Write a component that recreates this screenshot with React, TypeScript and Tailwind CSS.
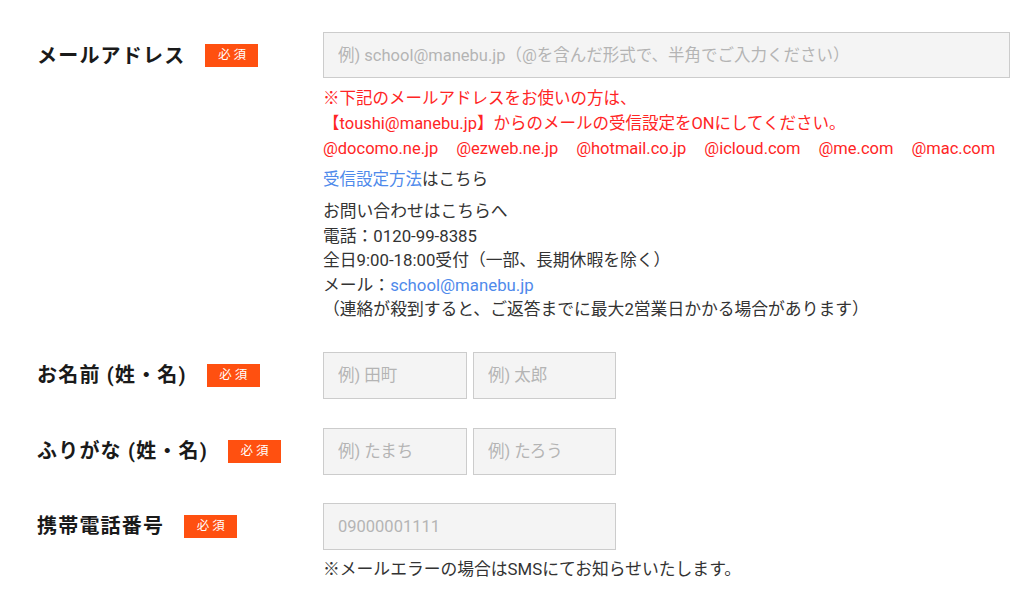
import React from 'react';

const font = { fontFamily: 'Roboto, "Noto Sans CJK JP", sans-serif' };

const Badge = () => (
    <span className="inline-flex items-center justify-center w-[53px] h-[23px] bg-[#ff5010] text-white text-[12.5px] tracking-[3px] pl-[3px] leading-none">
        必須
    </span>
);

const Label = ({ text, gap }: { text: string; gap: string }) => (
    <div className="w-[286px] h-[47px] shrink-0 flex items-center">
        <span className={`text-[20px] font-bold tracking-[1.2px] text-[#1a1a1a] ${gap}`}>{text}</span>
        <Badge />
    </div>
);

const Field = ({ placeholder, width }: { placeholder: string; width: string }) => (
    <input
        placeholder={placeholder}
        className={`${width} h-[47px] bg-[#f4f4f4] border border-[#cccccc] px-[14px] text-[16.5px] text-[#333] placeholder:text-[#b4b4b4] outline-none`}
    />
);

const App = () => {
    return (
        <div className="bg-white w-[1024px] h-[599px] overflow-hidden pl-[37px] pt-[32px]" style={font}>
            {/* メールアドレス */}
            <div className="flex">
                <Label text="メールアドレス" gap="mr-[20px]" />
                <div className="flex flex-col">
                    <Field placeholder="例) school@manebu.jp（@を含んだ形式で、半角でご入力ください）" width="w-[687px] !h-[46px]" />
                    <div className="mt-[8px] text-[16.5px] leading-[25px] text-[#ff2525]">
                        <p>※下記のメールアドレスをお使いの方は、</p>
                        <p>【toushi@manebu.jp】からのメールの受信設定をONにしてください。</p>
                        <p className="flex gap-[18px]">
                            <span>@docomo.ne.jp</span>
                            <span>@ezweb.ne.jp</span>
                            <span>@hotmail.co.jp</span>
                            <span>@icloud.com</span>
                            <span>@me.com</span>
                            <span>@mac.com</span>
                        </p>
                    </div>
                    <p className="mt-[6px] text-[16.5px] leading-[25px] text-[#333]">
                        <span className="text-[#4f8aeb]">受信設定方法</span>はこちら
                    </p>
                    <div className="mt-[7px] text-[16.8px] leading-[24.5px] text-[#333]">
                        <p>お問い合わせはこちらへ</p>
                        <p>電話：0120-99-8385</p>
                        <p>全日9:00-18:00受付（一部、長期休暇を除く）</p>
                        <p>
                            メール：<span className="text-[#4f8aeb]">school@manebu.jp</span>
                        </p>
                        <p>（連絡が殺到すると、ご返答までに最大2営業日かかる場合があります）</p>
                    </div>
                </div>
            </div>

            {/* お名前 */}
            <div className="flex mt-[30px]">
                <Label text="お名前 (姓・名)" gap="mr-[20px]" />
                <div className="flex gap-[6px]">
                    <Field placeholder="例) 田町" width="w-[144px]" />
                    <Field placeholder="例) 太郎" width="w-[143px]" />
                </div>
            </div>

            {/* ふりがな */}
            <div className="flex mt-[29px]">
                <Label text="ふりがな (姓・名)" gap="mr-[20px]" />
                <div className="flex gap-[6px]">
                    <Field placeholder="例) たまち" width="w-[144px]" />
                    <Field placeholder="例) たろう" width="w-[143px]" />
                </div>
            </div>

            {/* 携帯電話番号 */}
            <div className="flex mt-[28px]">
                <Label text="携帯電話番号" gap="mr-[20px]" />
                <div className="flex flex-col">
                    <Field placeholder="09000001111" width="w-[293px]" />
                    <p className="mt-[7px] text-[16.8px] leading-[24px] text-[#333]">
                        ※メールエラーの場合はSMSにてお知らせいたします。
                    </p>
                </div>
            </div>
        </div>
    );
};

export default App;
